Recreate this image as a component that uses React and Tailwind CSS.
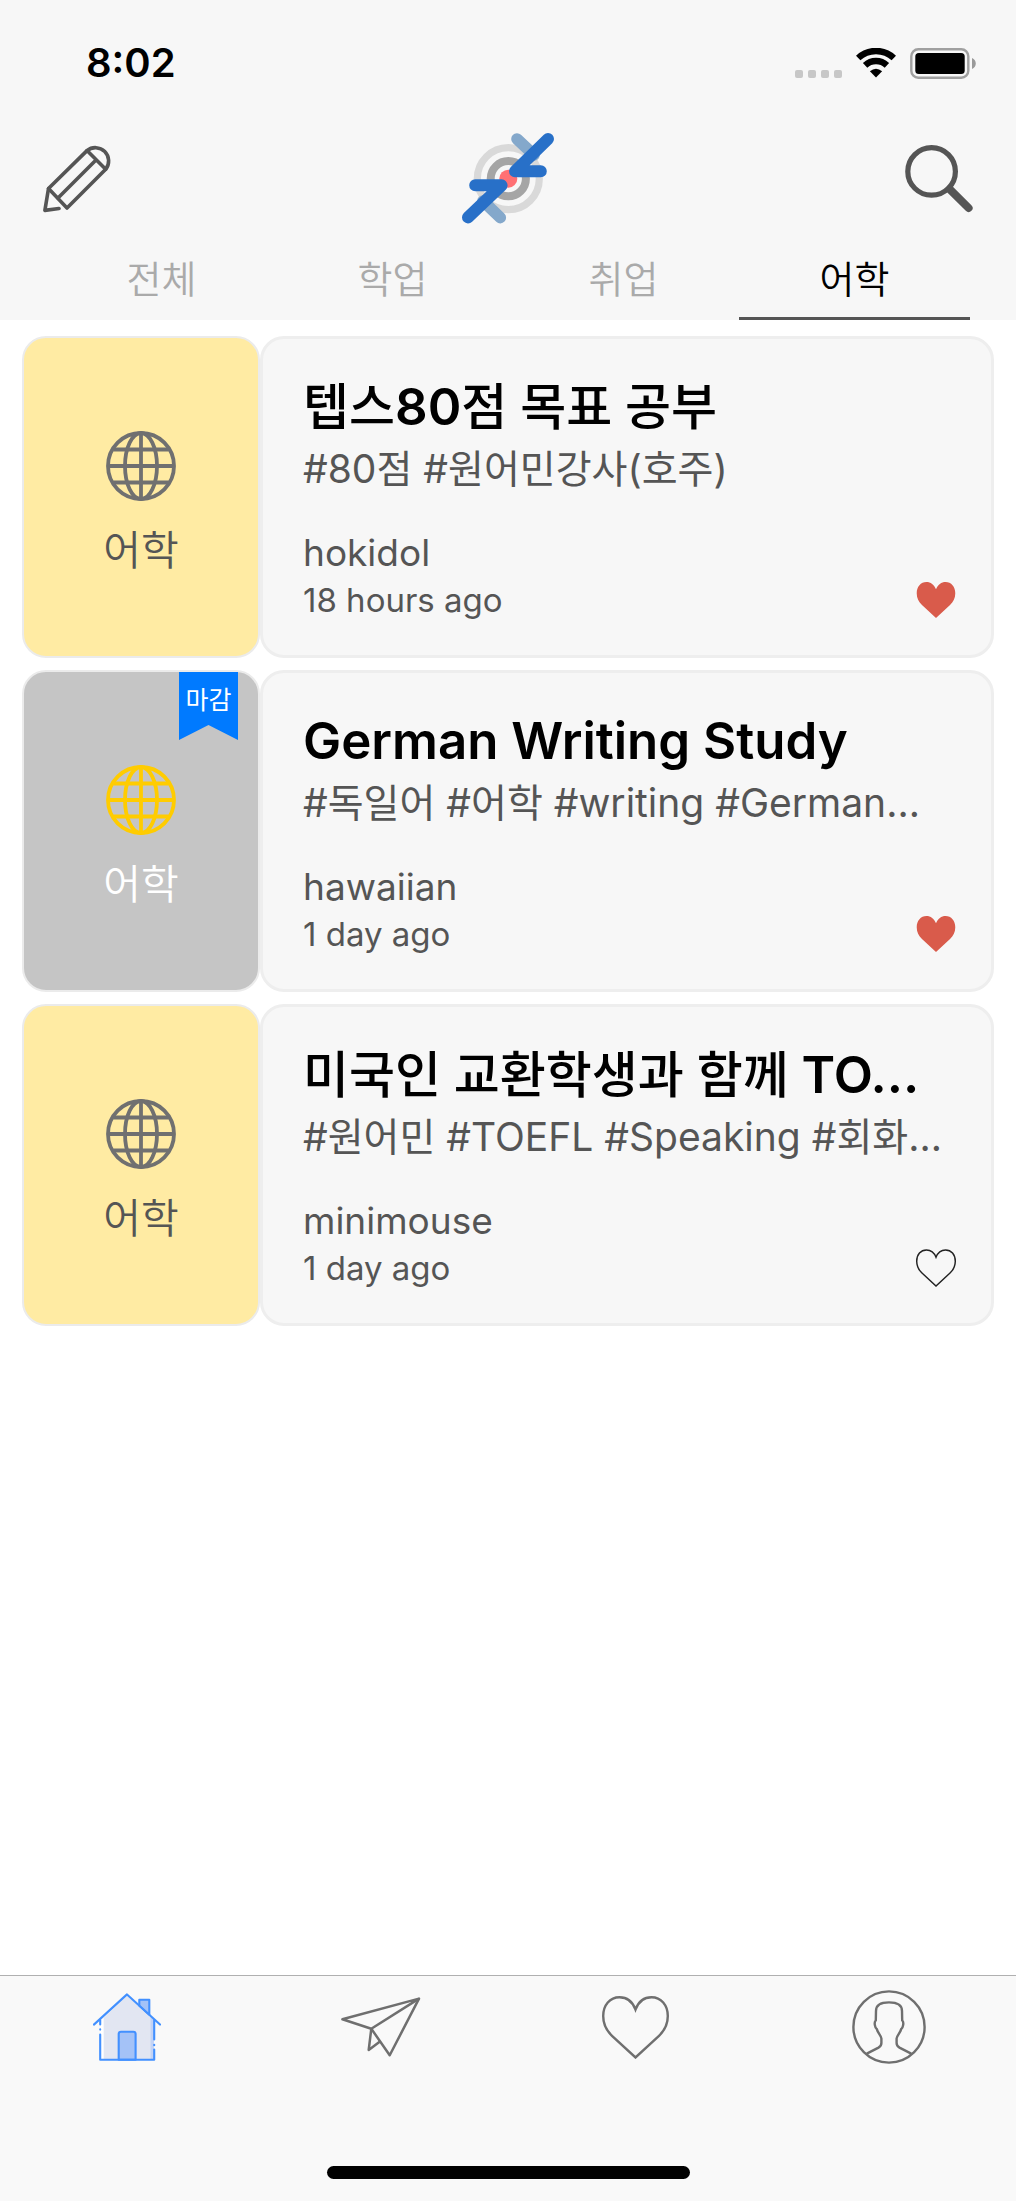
import React from "react";

const HANGUL = /([\u3131-\uD79D]+)/;

/* Hangul runs are set slightly smaller than the Latin text around them. */
function Mixed({ text, hangulClass }) {
  return text.split(HANGUL).map((part, i) =>
    i % 2 === 1 ? (
      <span key={i} className={hangulClass}>{part}</span>
    ) : (
      part
    )
  );
}

function SignalDots() {
  return (
    <div className="mb-px flex items-end gap-[5px] self-end">
      {[0, 1, 2, 3].map((i) => (
        <span key={i} className="size-2 rounded-[2px] bg-[#c7c7c7]" />
      ))}
    </div>
  );
}

function WifiIcon() {
  return (
    <svg viewBox="0 0 40 30" className="h-[30px] w-10" fill="none" stroke="#000" strokeWidth="6.4" aria-hidden="true">
      <path d="M2.2 10 A26 26 0 0 1 37.8 10" />
      <path d="M9.1 17.3 A16 16 0 0 1 30.9 17.3" />
      <path d="M13.9 23.2 Q20 18.2 26.1 23.2 L20 29.6 Z" fill="#000" stroke="none" />
    </svg>
  );
}

function BatteryIcon() {
  return (
    <svg viewBox="0 0 66 31" className="h-[31px] w-[66px]" aria-hidden="true">
      <rect x="1.3" y="1.3" width="57" height="28.4" rx="7" fill="none" stroke="#a0a0a0" strokeWidth="2.4" />
      <rect x="5.3" y="5" width="49.4" height="21" rx="3.5" fill="#000" />
      <path d="M62 10 C67 12 67 19 62 21 Z" fill="#9a9a9a" />
    </svg>
  );
}

function PencilIcon() {
  return (
    <svg viewBox="0 0 68 68" className="size-[68px]" fill="none" stroke="#555" strokeWidth="3.6" strokeLinecap="round" strokeLinejoin="round" aria-hidden="true">
      <path d="M5.5 43.5 L44 5.6 A13.3 13.3 0 0 1 62.7 24.3 L24 63 Z" />
      <path d="M44 5.6 L62.7 24.3 M15 53 L52.5 15.5" />
      <path d="M5.5 43.5 L1.9 65.4 L16 63.5" />
    </svg>
  );
}

function SearchIcon() {
  return (
    <svg viewBox="0 0 68 68" className="size-[68px]" fill="none" stroke="#555" strokeLinecap="round" aria-hidden="true">
      <circle cx="26.6" cy="26.4" r="23.8" strokeWidth="5.2" />
      <path d="M44.6 44.2 L63.6 63" strokeWidth="8" />
    </svg>
  );
}

function Logo() {
  return (
    <svg viewBox="42 23 92 92" className="size-[92px]" fill="none" role="img" aria-label="Home logo">
      <circle cx="88.3" cy="68.7" r="31" stroke="#d9d9d9" strokeWidth="7.2" />
      <circle cx="88.3" cy="68.7" r="17.6" stroke="#a5a5a5" strokeWidth="8" />
      <circle cx="88.3" cy="68.7" r="9" fill="#ff7074" />
      <g stroke="#84a8cb" strokeWidth="11.6" strokeLinecap="round">
        <path d="M97 29 L114 45" />
        <path d="M80.3 107.6 L63 91" />
      </g>
      <g stroke="#2870c8" strokeWidth="12" strokeLinecap="round" strokeLinejoin="round">
        <path d="M128 29 L95 61.3 L120.8 61.3" />
        <path d="M48 107.4 L81.6 75.3 L55.2 75.3" />
      </g>
    </svg>
  );
}

function GlobeIcon({ className }) {
  return (
    <svg viewBox="0 0 70 70" className={className} fill="none" stroke="currentColor" strokeWidth="3.8" aria-hidden="true">
      <circle cx="35" cy="35" r="33" />
      <ellipse cx="35" cy="35" rx="16" ry="33" />
      <path d="M35 2 V68 M2 35 H68 M7.5 18.5 H62.5 M7.5 51.5 H62.5" />
    </svg>
  );
}

const HEART =
  "M33.5 13.5 C30.5 5.5 24.5 1.2 17.5 1.2 C8 1.2 1.2 9 1.2 20 C1.2 28 4.5 34.5 10 39.8 L33.5 61.5 L57 39.8 C62.5 34.5 65.8 28 65.8 20 C65.8 9 59 1.2 49.5 1.2 C42.5 1.2 36.5 5.5 33.5 13.5 Z";

function HeartIcon({ className, fill = "none", stroke, strokeWidth }) {
  return (
    <svg viewBox="0 0 67 63" className={className} fill={fill} stroke={stroke} strokeWidth={strokeWidth} aria-hidden="true">
      <path d={HEART} />
    </svg>
  );
}

function HomeIcon() {
  return (
    <svg viewBox="0 0 68 68" className="size-[68px]" fill="none" stroke="#4290ff" strokeWidth="2.1" strokeLinecap="round" strokeLinejoin="round" aria-hidden="true">
      <path d="M46.3 13 V6.8 H56.3 V22 Z" fill="#a4c2f7" />
      <path d="M10.5 66 V25 L34 3 L61 27.5 V66 Z" fill="#e2e6f2" stroke="none" />
      <path d="M7.5 27.5 L10.5 24.8 V66 H7.5 Z" fill="#fff" stroke="none" />
      <path d="M57.5 24 L61 27.5 V66 H57.5 Z" fill="#c3d3f5" stroke="none" />
      <path d="M25.7 66.7 V41 Q25.7 38.7 28 38.7 H40.3 Q42.6 38.7 42.6 41 V66.7 Z" fill="#a4c2f7" />
      <path d="M0.9 31.6 L34 1.4 L67 31.6" />
      <path d="M7.2 27 V31.5 M7.2 36.4 V36.6 M7.2 41.5 V66.7 H61.2 V56.5 M61.2 52.3 V51.7 M61.2 46.5 V27" />
    </svg>
  );
}

function SendIcon() {
  return (
    <svg viewBox="0 0 80 60" className="h-[60px] w-20" fill="none" stroke="#6f6f6f" strokeWidth="2.5" strokeLinejoin="round" aria-hidden="true">
      <path d="M78 1.6 L1.4 22.3 L30.3 31.7 Z" />
      <path d="M30.3 31.7 L48.7 58.3 L78 1.6" />
      <path d="M30.3 31.7 L27.7 53 L39 44.5" />
    </svg>
  );
}

function ProfileIcon() {
  return (
    <svg viewBox="0 0 74 74" className="size-[74px]" fill="none" stroke="#6f6f6f" strokeWidth="2.4" aria-hidden="true">
      <circle cx="37" cy="37" r="35.6" />
      <path d="M14.8 63.6 L26.5 57.6 Q29.4 56 29.4 53 V48.5 C29.4 46 25.5 42.5 24.9 39.2 C22.8 37.8 21.8 32 23.8 30.3 L24 21 C24 15.4 29 12.4 37 12.4 C45 12.4 50 15.4 50 21 L50.2 30.3 C52.2 32 51.2 37.8 49.1 39.2 C48.5 42.5 44.6 46 44.6 48.5 V53 Q44.6 56 47.5 57.6 L59.2 63.6" />
    </svg>
  );
}

const TABS = ["전체", "학업", "취업", "어학"];

const STUDIES = [
  { title: "텝스80점 목표 공부", tags: "#80점 #원어민강사(호주)", author: "hokidol", time: "18 hours ago", liked: true },
  { title: "German Writing Study", tags: "#독일어 #어학 #writing #German...", author: "hawaiian", time: "1 day ago", liked: true, closed: true },
  { title: "미국인 교환학생과 함께 TO...", tags: "#원어민 #TOEFL #Speaking #회화...", author: "minimouse", time: "1 day ago" },
];

function StudyCard({ study }) {
  const { title, tags, author, time, liked, closed } = study;
  return (
    <article className="flex">
      <div
        className={
          "relative flex w-[238px] shrink-0 flex-col items-center rounded-3xl border-2 border-[#ebebeb] pt-[93px] " +
          (closed ? "bg-[#c5c5c5] text-white" : "bg-[#ffeba3] text-[#555]")
        }
      >
        {closed && (
          <span className="absolute right-5 top-0 h-[68px] w-[59px] bg-[#007aff] pt-3 text-center text-[25px] leading-8 text-white [clip-path:polygon(0_0,100%_0,100%_100%,50%_78%,0_100%)]">
            마감
          </span>
        )}
        <GlobeIcon className={closed ? "size-[70px] text-[#ffcc00]" : "size-[70px] text-[#707070]"} />
        <span className="mt-5 text-[41px] font-[350] leading-[58px]">어학</span>
      </div>
      <div className="flex min-w-0 flex-1 items-end justify-between rounded-3xl border-[3px] border-[#eee] bg-[#f7f7f7] pb-8 pl-10 pr-[35px] pt-9">
        <div className="min-w-0 flex-1 font-[380] text-[#555]">
          <h2 className="whitespace-nowrap text-[51px] font-semibold leading-[64px] text-black">
            <Mixed text={title} hangulClass="text-[50px] font-medium leading-none" />
          </h2>
          <p className="mt-1 whitespace-nowrap text-[39px] leading-[52px]">
            <Mixed text={tags} hangulClass="leading-none" />
          </p>
          <p className="mt-[34px] text-[37px] leading-[48px]">{author}</p>
          <p className="text-[33px] leading-[46px]">{time}</p>
        </div>
        <button type="button" aria-label="Like" aria-pressed={Boolean(liked)} className="-ml-10 mb-1 shrink-0">
          {liked ? (
            <HeartIcon className="h-[38px] w-10" fill="#d95b4b" />
          ) : (
            <HeartIcon className="h-[38px] w-10" stroke="#222" strokeWidth="2.4" />
          )}
        </button>
      </div>
    </article>
  );
}

const NAV = [
  { label: "Home", icon: <HomeIcon /> },
  { label: "Messages", icon: <SendIcon /> },
  { label: "Favorites", icon: <HeartIcon className="h-[63px] w-[67px]" stroke="#6f6f6f" strokeWidth="2.4" /> },
  { label: "Profile", icon: <ProfileIcon /> },
];

export default function App() {
  return (
    <div className="flex min-h-screen flex-col bg-white font-['Inter','Noto_Sans_CJK_KR',sans-serif]" lang="ko">
      <header className="bg-[#f7f7f7]">
        <div className="flex items-center justify-between pl-[86px] pr-10 pt-9">
          <time className="text-[40px] font-semibold leading-[54px]">8:02</time>
          <div className="flex items-center gap-[14px]">
            <SignalDots />
            <WifiIcon />
            <BatteryIcon />
          </div>
        </div>
        <div className="mt-[43px] flex items-center justify-between px-[43px]">
          <button type="button" aria-label="Write"><PencilIcon /></button>
          <Logo />
          <button type="button" aria-label="Search"><SearchIcon /></button>
        </div>
        <div role="tablist" className="mt-[23px] flex px-[46px]">
          {TABS.map((tab, i) => (
            <button
              key={tab}
              type="button"
              role="tab"
              aria-selected={i === 3}
              className={
                "h-[72px] flex-1 border-b-[3px] pb-[6px] text-[38px] font-[350] " +
                (i === 3 ? "border-[#555] text-black" : "border-transparent text-[#aaa]")
              }
            >
              {tab}
            </button>
          ))}
        </div>
      </header>

      <main className="flex flex-1 flex-col gap-3 px-[22px] pt-4">
        {STUDIES.map((study) => (
          <StudyCard key={study.title} study={study} />
        ))}
      </main>

      <footer className="border-t border-[#b0b0b0] bg-[#f9f9f9]">
        <nav className="flex pt-[14px]">
          {NAV.map((item) => (
            <a key={item.label} href="#" aria-label={item.label} className="flex h-[74px] flex-1 items-center justify-center">
              {item.icon}
            </a>
          ))}
        </nav>
        <div className="mx-auto mb-[22px] mt-[102px] h-[13px] w-[363px] rounded-full bg-black" />
      </footer>
    </div>
  );
}
